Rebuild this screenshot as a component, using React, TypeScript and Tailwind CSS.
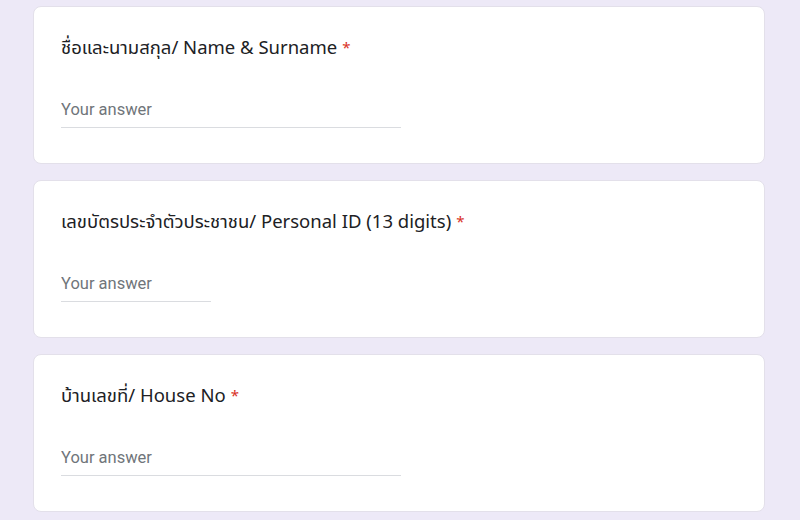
const QUESTIONS = [
  { id: 'name', label: 'ชื่อและนามสกุล/ Name & Surname', inputWidth: 'w-[340px]' },
  { id: 'pid', label: 'เลขบัตรประจำตัวประชาชน/ Personal ID (13 digits)', inputWidth: 'w-[150px]' },
  { id: 'house', label: 'บ้านเลขที่/ House No', inputWidth: 'w-[340px]' },
];

export default function App() {
  return (
    <div
      className="min-h-screen w-[800px] h-[520px] overflow-hidden bg-[#ede9f7] pt-[6px] pl-[33px]"
      style={{ fontFamily: 'Roboto, "Noto Sans", "Noto Sans Thai", "DejaVu Sans", sans-serif' }}
    >
      <div className="flex w-[732px] flex-col gap-4">
        {QUESTIONS.map((q) => (
          <div
            key={q.id}
            className="h-[158px] rounded-lg border border-[#e3e0ea] bg-white pl-[27px] pt-[28px]"
          >
            <div
              className="flex h-6 items-center text-[18.5px] text-[#202124]"
              style={{ fontFamily: '"Noto Sans", "Noto Sans Thai", sans-serif' }}
            >
              <span>{q.label}</span>
              <span className="ml-[5px] text-[15px] text-[#d93025]">*</span>
            </div>
            <div className={`mt-[39px] ${q.inputWidth} border-b border-[#dadce0] pb-[5px]`}>
              <input
                type="text"
                placeholder="Your answer"
                className="h-6 w-full bg-transparent text-[16.5px] text-[#202124] placeholder-[#70757a] outline-none"
              />
            </div>
          </div>
        ))}
      </div>
    </div>
  );
}
